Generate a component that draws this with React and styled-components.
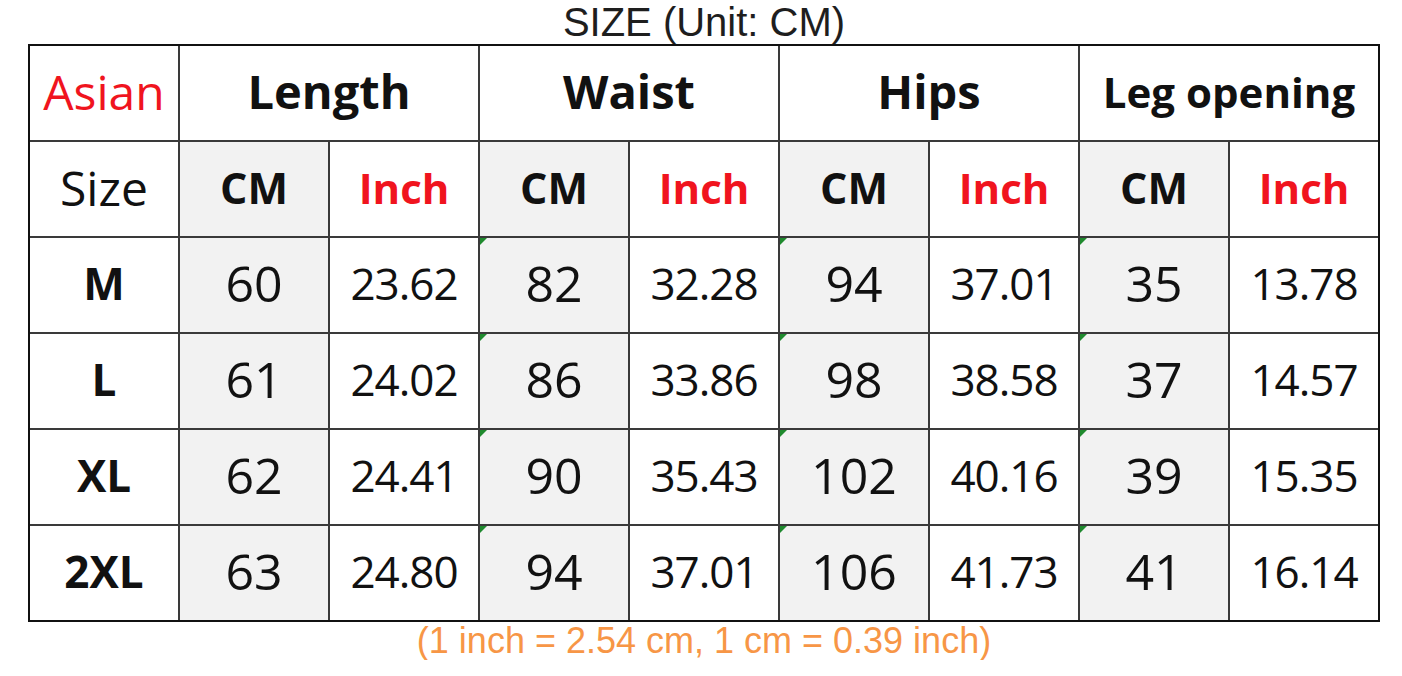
import React from 'react';
import styled, { createGlobalStyle } from 'styled-components';

const GlobalStyle = createGlobalStyle`
  body {
    margin: 0;
    background: #fff;
    font-family: "Open Sans", "Noto Sans", sans-serif;
  }
`;

const Page = styled.div`
  width: 1402px;
  display: flex;
  flex-direction: column;
  align-items: center;
  padding-left: 6px;
  box-sizing: border-box;
`;

const Title = styled.div`
  font-family: "Liberation Sans", Arial, sans-serif;
  font-size: 40px;
  line-height: 44px;
  color: #1e1e1e;
`;

const Grid = styled.div`
  display: grid;
  grid-template-columns: repeat(9, 148px);
  grid-auto-rows: 94px;
  gap: 2px;
  background: #3a3a3a;
  border: 2px solid #111;
`;

const Cell = styled.div`
  position: relative;
  display: flex;
  align-items: center;
  justify-content: center;
  padding-bottom: 4px;
  box-sizing: border-box;
  grid-column: span ${(p) => p.$span || 1};
  background: ${(p) => (p.$shade ? '#f2f2f2' : '#fff')};
  color: ${(p) => (p.$red ? '#f0141e' : '#111')};
  font-size: ${(p) => p.$size || 48}px;
  font-weight: ${(p) => (p.$bold ? 700 : 400)};
  letter-spacing: ${(p) => p.$track || 0}px;
  white-space: nowrap;

  ${(p) =>
    p.$mark &&
    `
    &::before {
      content: '';
      position: absolute;
      left: 0;
      top: 0;
      border-top: 7px solid #1f8a2e;
      border-right: 7px solid transparent;
    }
  `}
`;

const Note = styled.div`
  font-family: "Liberation Sans", Arial, sans-serif;
  font-size: 36px;
  line-height: 38px;
  color: #f79646;
`;

const groups = ['Length', 'Waist', 'Hips', 'Leg opening'];

const rows = [
  ['M', ['60', '23.62'], ['82', '32.28'], ['94', '37.01'], ['35', '13.78']],
  ['L', ['61', '24.02'], ['86', '33.86'], ['98', '38.58'], ['37', '14.57']],
  ['XL', ['62', '24.41'], ['90', '35.43'], ['102', '40.16'], ['39', '15.35']],
  ['2XL', ['63', '24.80'], ['94', '37.01'], ['106', '41.73'], ['41', '16.14']],
];

const App = () => (
  <Page>
    <GlobalStyle />
    <Title>SIZE (Unit: CM)</Title>
    <Grid>
      <Cell $red $size={48}>Asian</Cell>
      {groups.map((g) => (
        <Cell key={g} $span={2} $bold $size={g === 'Leg opening' ? 42 : 47}>
          {g}
        </Cell>
      ))}

      <Cell $size={48}>Size</Cell>
      {groups.map((g) => (
        <React.Fragment key={g}>
          <Cell $shade $bold $size={43}>CM</Cell>
          <Cell $red $bold $size={42}>Inch</Cell>
        </React.Fragment>
      ))}

      {rows.map(([label, ...vals]) => (
        <React.Fragment key={label}>
          <Cell $bold $size={44}>{label}</Cell>
          {vals.map(([cm, inch], i) => (
            <React.Fragment key={i}>
              <Cell $shade $mark={i > 0} $size={50}>{cm}</Cell>
              <Cell $size={44} $track={-1}>{inch}</Cell>
            </React.Fragment>
          ))}
        </React.Fragment>
      ))}
    </Grid>
    <Note>(1 inch = 2.54 cm, 1 cm = 0.39 inch)</Note>
  </Page>
);

export default App;
